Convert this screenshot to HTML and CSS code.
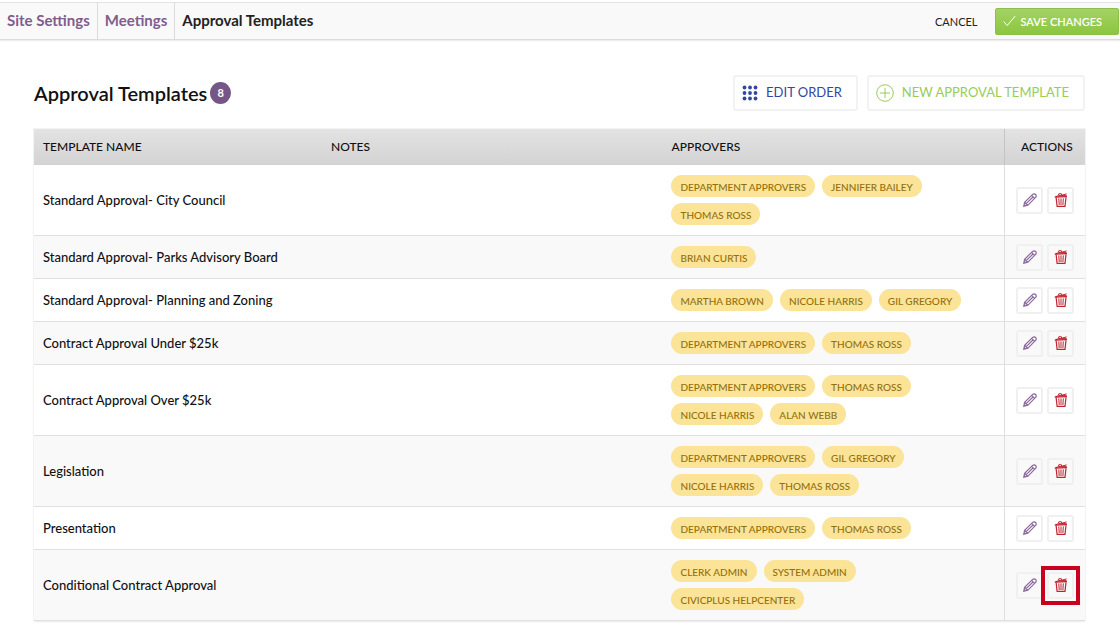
FILE: index.html
```html
<!DOCTYPE html>
<html lang="en">
<head>
    <meta charset="UTF-8">
    <title>Approval Templates</title>
    <link rel="stylesheet" href="styles.css">
</head>
<body>
    <!-- icons used by the rows -->
    <svg class="icon-defs" aria-hidden="true">
        <symbol id="pencil" viewBox="0 0 14 14">
            <path d="M.8 13.2 L1.6 9.2 L9.6 1.4 Q11.2 .2 12.6 1.5 Q13.8 2.9 12.6 4.4 L4.8 12.3 Z M1.6 9.2 L4.8 12.3 M8.8 2.6 L11.4 5.2 M3.2 10.6 L10.2 3.8" fill="none" stroke="currentColor" stroke-width="1.2"/>
            <path d="M.8 13.2 L1.3 10.8 L3.2 12.6 Z" fill="currentColor"/>
        </symbol>
        <symbol id="trash" viewBox="0 0 14 14">
            <path d="M.8 4 L13 3.6" fill="none" stroke="currentColor" stroke-width="1.4"/>
            <path d="M2 3.5 L5 2.6 L4.6 .9 L7.2 .6 L7.8 2.2 L12.6 .9 M5 2.6 L12.6 2.6" fill="none" stroke="currentColor" stroke-width="1"/>
            <path d="M2.1 4.4 L3.1 13.3 L11 13.3 L12 4.4" fill="none" stroke="currentColor" stroke-width="1.2"/>
            <path d="M4.8 5.4 L5.2 12 M7 5.4 L7 12 M9.3 5.4 L8.9 12" fill="none" stroke="currentColor" stroke-width="1"/>
        </symbol>
    </svg>

    <header class="topbar">
        <nav class="breadcrumb">
            <a href="#">Site Settings</a>
            <a href="#">Meetings</a>
            <span>Approval Templates</span>
        </nav>
        <div class="topbar-actions">
            <button type="button" class="cancel-btn">CANCEL</button>
            <button type="button" class="save-btn">
                <svg width="13" height="12" viewBox="0 0 13 12" aria-hidden="true"><path d="M.7 6.5 L4.2 10.5 L12.2 1" fill="none" stroke="currentColor" stroke-width="1"/></svg>
                SAVE CHANGES
            </button>
        </div>
    </header>

    <main class="content">
        <div class="page-head">
            <h1>Approval Templates</h1>
            <span class="count">8</span>
            <div class="head-actions">
                <button type="button" class="outline-btn edit-order">
                    <svg width="16" height="16" viewBox="0 0 16 16" fill="currentColor" aria-hidden="true">
                        <circle cx="2.5" cy="2.5" r="1.9"/><circle cx="8" cy="2.5" r="1.9"/><circle cx="13.5" cy="2.5" r="1.9"/>
                        <circle cx="2.5" cy="8" r="1.9"/><circle cx="8" cy="8" r="1.9"/><circle cx="13.5" cy="8" r="1.9"/>
                        <circle cx="2.5" cy="13.5" r="1.9"/><circle cx="8" cy="13.5" r="1.9"/><circle cx="13.5" cy="13.5" r="1.9"/>
                    </svg>
                    <span>EDIT ORDER</span>
                </button>
                <button type="button" class="outline-btn new-template">
                    <svg width="18" height="18" viewBox="0 0 18 18" fill="none" stroke="currentColor" aria-hidden="true">
                        <circle cx="9" cy="9" r="8.3"/><path d="M9 4 V14 M4 9 H14"/>
                    </svg>
                    <span>NEW APPROVAL TEMPLATE</span>
                </button>
            </div>
        </div>

        <table class="templates">
            <thead>
                <tr>
                    <th class="col-name">TEMPLATE NAME</th>
                    <th class="col-notes">NOTES</th>
                    <th>APPROVERS</th>
                    <th class="col-actions">ACTIONS</th>
                </tr>
            </thead>
            <tbody>
                <tr>
                    <td>Standard Approval- City Council</td>
                    <td></td>
                    <td><div class="pills"><span>DEPARTMENT APPROVERS</span><span>JENNIFER BAILEY</span><span>THOMAS ROSS</span></div></td>
                    <td class="actions"><div class="btns">
                        <button type="button" class="edit" aria-label="Edit"><svg><use href="#pencil"/></svg></button>
                        <button type="button" class="delete" aria-label="Delete"><svg><use href="#trash"/></svg></button>
                    </div></td>
                </tr>
                <tr>
                    <td>Standard Approval- Parks Advisory Board</td>
                    <td></td>
                    <td><div class="pills"><span>BRIAN CURTIS</span></div></td>
                    <td class="actions"><div class="btns">
                        <button type="button" class="edit" aria-label="Edit"><svg><use href="#pencil"/></svg></button>
                        <button type="button" class="delete" aria-label="Delete"><svg><use href="#trash"/></svg></button>
                    </div></td>
                </tr>
                <tr>
                    <td>Standard Approval- Planning and Zoning</td>
                    <td></td>
                    <td><div class="pills"><span>MARTHA BROWN</span><span>NICOLE HARRIS</span><span>GIL GREGORY</span></div></td>
                    <td class="actions"><div class="btns">
                        <button type="button" class="edit" aria-label="Edit"><svg><use href="#pencil"/></svg></button>
                        <button type="button" class="delete" aria-label="Delete"><svg><use href="#trash"/></svg></button>
                    </div></td>
                </tr>
                <tr>
                    <td>Contract Approval Under $25k</td>
                    <td></td>
                    <td><div class="pills"><span>DEPARTMENT APPROVERS</span><span>THOMAS ROSS</span></div></td>
                    <td class="actions"><div class="btns">
                        <button type="button" class="edit" aria-label="Edit"><svg><use href="#pencil"/></svg></button>
                        <button type="button" class="delete" aria-label="Delete"><svg><use href="#trash"/></svg></button>
                    </div></td>
                </tr>
                <tr>
                    <td>Contract Approval Over $25k</td>
                    <td></td>
                    <td><div class="pills"><span>DEPARTMENT APPROVERS</span><span>THOMAS ROSS</span><span>NICOLE HARRIS</span><span>ALAN WEBB</span></div></td>
                    <td class="actions"><div class="btns">
                        <button type="button" class="edit" aria-label="Edit"><svg><use href="#pencil"/></svg></button>
                        <button type="button" class="delete" aria-label="Delete"><svg><use href="#trash"/></svg></button>
                    </div></td>
                </tr>
                <tr>
                    <td>Legislation</td>
                    <td></td>
                    <td><div class="pills"><span>DEPARTMENT APPROVERS</span><span>GIL GREGORY</span><span>NICOLE HARRIS</span><span>THOMAS ROSS</span></div></td>
                    <td class="actions"><div class="btns">
                        <button type="button" class="edit" aria-label="Edit"><svg><use href="#pencil"/></svg></button>
                        <button type="button" class="delete" aria-label="Delete"><svg><use href="#trash"/></svg></button>
                    </div></td>
                </tr>
                <tr>
                    <td>Presentation</td>
                    <td></td>
                    <td><div class="pills"><span>DEPARTMENT APPROVERS</span><span>THOMAS ROSS</span></div></td>
                    <td class="actions"><div class="btns">
                        <button type="button" class="edit" aria-label="Edit"><svg><use href="#pencil"/></svg></button>
                        <button type="button" class="delete" aria-label="Delete"><svg><use href="#trash"/></svg></button>
                    </div></td>
                </tr>
                <tr>
                    <td>Conditional Contract Approval</td>
                    <td></td>
                    <td><div class="pills"><span>CLERK ADMIN</span><span>SYSTEM ADMIN</span><span>CIVICPLUS HELPCENTER</span></div></td>
                    <td class="actions"><div class="btns">
                        <button type="button" class="edit" aria-label="Edit"><svg><use href="#pencil"/></svg></button>
                        <button type="button" class="delete highlight" aria-label="Delete"><svg><use href="#trash"/></svg></button>
                    </div></td>
                </tr>
            </tbody>
        </table>
    </main>
</body>
</html>
```
FILE: styles.css
```css
* {
    box-sizing: border-box;
}

body {
    margin: 0;
    background-color: #fff;
    color: #111;
    font-family: Lato, "Liberation Sans", sans-serif;
    font-size: 13px;
}

button {
    font-family: inherit;
    cursor: pointer;
}

.icon-defs {
    display: none;
}

/* top bar */
.topbar {
    display: flex;
    justify-content: space-between;
    margin-top: 2px;
    height: 38px;
    background-color: #f9f9f9;
    border-top: 1px solid #e3e3e3;
    border-bottom: 1px solid #dcdcdc;
    box-shadow: 0 1px 1px #eee;
}

.breadcrumb {
    display: flex;
    font-size: 15px;
    font-weight: 700;
}

.breadcrumb a,
.breadcrumb span {
    display: flex;
    align-items: center;
    padding: 0 7px 2px;
}

.breadcrumb span {
    color: #222;
}

.breadcrumb a {
    color: #7f5d8e;
    text-decoration: none;
    border-right: 1px solid #dcdcdc;
}

.topbar-actions {
    display: flex;
    align-items: center;
    gap: 18px;
    padding-right: 1px;
}

.cancel-btn {
    border: none;
    background: none;
    padding: 0;
    color: #222;
    font-size: 11px;
}

.save-btn {
    display: flex;
    align-items: center;
    gap: 4px;
    height: 27px;
    padding: 0 16px 0 7px;
    border: 1px solid #8dc04a;
    border-radius: 2px;
    background: linear-gradient(#a3d365, #8cc63f);
    color: #fff;
    font-size: 11px;
    font-weight: 600;
}

/* page heading */
.content {
    padding: 35px 35px 6px 34px;
}

.page-head {
    display: flex;
    align-items: center;
    margin-bottom: 18px;
}

h1 {
    margin: 0;
    font-size: 20px;
    font-weight: 600;
}

.count {
    width: 21px;
    height: 22px;
    margin-left: 3px;
    border-radius: 50%;
    background-color: #765687;
    color: #fff;
    font-size: 11px;
    font-weight: 700;
    line-height: 22px;
    text-align: center;
}

.head-actions {
    display: flex;
    gap: 9px;
    margin-left: auto;
}

.outline-btn {
    display: flex;
    align-items: center;
    gap: 8px;
    height: 36px;
    padding: 0 14px 0 7px;
    border: 2px solid #f2f2f2;
    border-radius: 3px;
    background-color: #fff;
    font-size: 13px;
}

.outline-btn span {
    padding-bottom: 2px;
}

.edit-order {
    color: #3147a3;
}

.new-template {
    color: #98cc56;
}

/* table */
.templates {
    width: 100%;
    table-layout: fixed;
    border-collapse: separate;
    border-spacing: 0;
    border-radius: 0 0 3px 3px;
    box-shadow: 0 0 1px 1px #f2f2f2, 0 1px 1px #ccc;
}

.col-name {
    width: 27.4%;
}

.col-notes {
    width: 32.4%;
}

.col-actions {
    width: 81px;
}

th {
    height: 36px;
    padding: 0 9px 2px;
    background: linear-gradient(#e3e3e3, #d3d3d3);
    font-size: 12px;
    font-weight: 500;
    text-align: left;
}

th.col-actions {
    padding-left: 16px;
    border-left: 1px solid #c4c4c4;
}

td {
    padding: 10px 9px;
    border-bottom: 1px solid #e0e0e0;
    font-weight: 500;
}

tbody tr:nth-child(even) td {
    background-color: #f9f9f9;
}

.pills {
    display: flex;
    flex-wrap: wrap;
    gap: 6px 7px;
    padding-right: 12px;
}

.pills span {
    height: 22px;
    padding: 0 9px;
    border-radius: 11px;
    background-color: #fbe397;
    color: #93700b;
    font-size: 10px;
    line-height: 24px;
}

td.actions {
    padding: 0 11px;
    border-left: 1px solid #dedede;
}

.btns {
    display: flex;
    gap: 4px;
}

.btns button {
    display: flex;
    align-items: center;
    justify-content: center;
    width: 27px;
    height: 27px;
    padding: 0;
    border: 2px solid #f0f0f0;
    border-radius: 3px;
    background: none;
}

.btns svg {
    width: 14px;
    height: 14px;
}

.edit {
    color: #8a6a9a;
}

.delete {
    color: #c0242f;
}

.highlight {
    position: relative;
}

.highlight::after {
    content: "";
    position: absolute;
    inset: -8px;
    border: 4px solid #ca0020;
}
```
